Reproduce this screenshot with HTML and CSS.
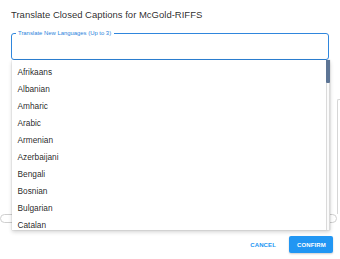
FILE: index.html
```html
<!DOCTYPE html>
<html lang="en">
<head>
<meta charset="utf-8">
<title>Translate Closed Captions</title>
<link rel="stylesheet" href="styles.css">
</head>
<body>
<div class="dialog">
  <h2 class="title">Translate Closed Captions for McGold-RIFFS</h2>
  <div class="field">
    <span class="field-label">Translate New Languages (Up to 3)</span>
    <div class="menu">
      <ul class="menu-list">
        <li>Afrikaans</li><li>Albanian</li><li>Amharic</li><li>Arabic</li><li>Armenian</li>
        <li>Azerbaijani</li><li>Bengali</li><li>Bosnian</li><li>Bulgarian</li><li>Catalan</li>
      </ul>
      <div class="scrollbar"><div class="thumb"></div></div>
    </div>
  </div>
  <div class="behind">
    <div class="panel"></div>
    <div class="pill"></div>
  </div>
  <div class="actions">
    <button class="btn btn-text">Cancel</button>
    <button class="btn btn-primary">Confirm</button>
  </div>
</div>
</body>
</html>
```
FILE: styles.css
```css
* { box-sizing: border-box; }
html, body {
  margin: 0;
  padding: 0;
  width: 340px;
  height: 259px;
  overflow: hidden;
  background: #fff;
  font-family: "Liberation Sans", Arial, sans-serif;
}
.dialog {
  padding: 8.5px 7px 0 11px;
  display: flex;
  flex-direction: column;
}
.title {
  margin: 0 0 12.5px 0;
  font-size: 9.5px;
  line-height: 12px;
  font-weight: normal;
  color: rgba(0, 0, 0, 0.85);
}
.field {
  position: relative;
  height: 27px;
  margin-right: 4px;
  border: 1px solid #2f86dd;
  border-radius: 3px;
}
.field-label {
  position: absolute;
  left: 3.5px;
  top: -4px;
  padding: 0 2.5px;
  background: #fff;
  font-size: 5.9px;
  line-height: 7px;
  color: #2a82db;
}
.menu {
  position: absolute;
  left: 0;
  top: 26px;
  width: 318px;
  height: 170px;
  background: #fff;
  overflow: hidden;
  box-shadow: 0 2px 4px rgba(0, 0, 0, 0.18), 0 0 1px rgba(0, 0, 0, 0.25);
  z-index: 2;
}
.menu-list {
  margin: 0;
  padding: 3.5px 0 0 0;
  list-style: none;
}
.menu-list li {
  height: 17px;
  line-height: 17px;
  padding-left: 5.5px;
  font-size: 8.3px;
  color: rgba(0, 0, 0, 0.87);
  white-space: nowrap;
}
.scrollbar {
  position: absolute;
  top: 0;
  right: 0.5px;
  bottom: 0;
  width: 4px;
  background: #fbfbfb;
  border-left: 1px solid #dadada;
  border-right: 1px solid #dadada;
}
.thumb {
  margin: 0 -1px;
  height: 23px;
  background: #5d7595;
  border-radius: 0 0 1px 1px;
}
.behind {
  margin: 39px -7px 0 -11px;
  display: flex;
  flex-direction: column;
}
.panel {
  margin-left: 337px;
  height: 115px;
  border: 1px solid #d6d6d6;
  border-right: none;
  border-bottom: none;
  border-radius: 2px 0 0 0;
}
.pill {
  width: 337px;
  height: 9px;
  border: 1px solid #cfcfcf;
  border-radius: 5px;
}
.actions {
  display: flex;
  justify-content: flex-end;
  align-items: center;
  gap: 9px;
  margin-top: 13px;
}
.btn {
  height: 17px;
  padding: 0 8px;
  border: none;
  border-radius: 2px;
  font-family: "Liberation Sans", Arial, sans-serif;
  font-size: 6px;
  font-weight: bold;
  letter-spacing: 0.02em;
  text-transform: uppercase;
  cursor: pointer;
}
.btn-text {
  background: transparent;
  color: #2196f3;
  padding: 0 4px;
}
.btn-primary {
  background: #2196f3;
  color: #fff;
  width: 44px;
  box-shadow: 0 1px 2px rgba(0, 0, 0, 0.2);
}
```
